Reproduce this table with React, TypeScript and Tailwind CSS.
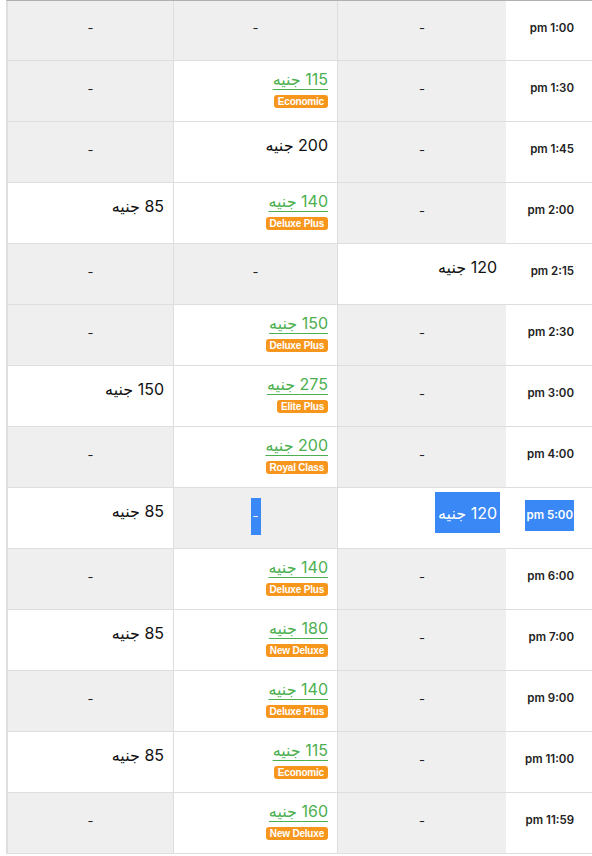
type Cell =
  | null
  | { price: number; badge?: string };

type Row = {
  time: string;
  a: Cell;
  b: Cell;
  c: Cell;
  selected?: boolean;
};

const rows: Row[] = [
  { time: "1:00", a: null, b: null, c: null },
  { time: "1:30", a: null, b: { price: 115, badge: "Economic" }, c: null },
  { time: "1:45", a: null, b: { price: 200 }, c: null },
  { time: "2:00", a: null, b: { price: 140, badge: "Deluxe Plus" }, c: { price: 85 } },
  { time: "2:15", a: { price: 120 }, b: null, c: null },
  { time: "2:30", a: null, b: { price: 150, badge: "Deluxe Plus" }, c: null },
  { time: "3:00", a: null, b: { price: 275, badge: "Elite Plus" }, c: { price: 150 } },
  { time: "4:00", a: null, b: { price: 200, badge: "Royal Class" }, c: null },
  { time: "5:00", a: { price: 120 }, b: null, c: { price: 85 }, selected: true },
  { time: "6:00", a: null, b: { price: 140, badge: "Deluxe Plus" }, c: null },
  { time: "7:00", a: null, b: { price: 180, badge: "New Deluxe" }, c: { price: 85 } },
  { time: "9:00", a: null, b: { price: 140, badge: "Deluxe Plus" }, c: null },
  { time: "11:00", a: null, b: { price: 115, badge: "Economic" }, c: { price: 85 } },
  { time: "11:59", a: null, b: { price: 160, badge: "New Deluxe" }, c: null },
];

const font = "font-['Inter','DejaVu_Sans',sans-serif]";

function PriceCell({ cell, selected, width }: { cell: Cell; selected?: boolean; width: string }) {
  if (!cell) {
    return (
      <div className={`${width} border-l border-[#dedede] bg-[#efefef] flex items-center justify-center pb-[4px] text-[13px] text-[#222]`}>
        {selected ? (
          <span className="bg-[#3a88f5] text-white px-[2px] py-[10px] leading-[17px]">-</span>
        ) : (
          <span className="leading-[17px]">-</span>
        )}
      </div>
    );
  }
  if (!cell.badge) {
    return (
      <div className={`${width} border-l border-[#dedede] bg-white flex items-start pt-[13px] pr-[9px]`}>
        {selected ? (
          <span className="bg-[#3a88f5] text-white text-[16px] leading-[20px] px-[3px] -mr-[3px] pt-[11px] pb-[10px] -mt-[9px]">
            {cell.price} جنيه
          </span>
        ) : (
          <span className="text-[16px] leading-[20px] text-[#111]">{cell.price} جنيه</span>
        )}
      </div>
    );
  }
  return (
    <div className={`${width} border-l border-[#dedede] bg-white flex flex-col items-start pt-[8px] pr-[9px]`}>
      <a href="#" className="text-[16px] leading-[20px] text-[#4caf50] underline underline-offset-[4px]">
        {cell.price} جنيه
      </a>
      <span className="mt-[6px] rounded-[3px] bg-[#f7961c] px-[4px] h-[13px] flex items-center text-[10px] font-bold text-white font-['Liberation_Sans',sans-serif] tracking-[-0.2px]">
        {cell.badge}
      </span>
    </div>
  );
}

export default function App() {
  return (
    <div className={`w-[592px] h-[856px] overflow-hidden bg-white ${font}`}>
      <div dir="rtl" className="ml-[6px] w-[587px] border-t border-[#b0b0b0] border-l border-l-[#dedede]">
        {rows.map((r, i) => (
          <div key={r.time} className={`flex ${i === 0 ? "h-[60px]" : "h-[61px]"} border-b border-[#dedede]`}>
            <div className="w-[87px] flex items-center pr-[19px] pb-[5px] bg-white">
              <span
                className={`text-[11.5px] leading-[13px] font-semibold text-[#222] ${
                  r.selected ? "bg-[#3a88f5] text-white px-[1px] py-[9px]" : ""
                }`}
              >
                {r.time} pm
              </span>
            </div>
            <PriceCell cell={r.a} selected={r.selected} width="w-[169px]" />
            <PriceCell cell={r.b} selected={r.selected} width="w-[164px]" />
            <PriceCell cell={r.c} width="w-[166px]" />
          </div>
        ))}
      </div>
    </div>
  );
}
